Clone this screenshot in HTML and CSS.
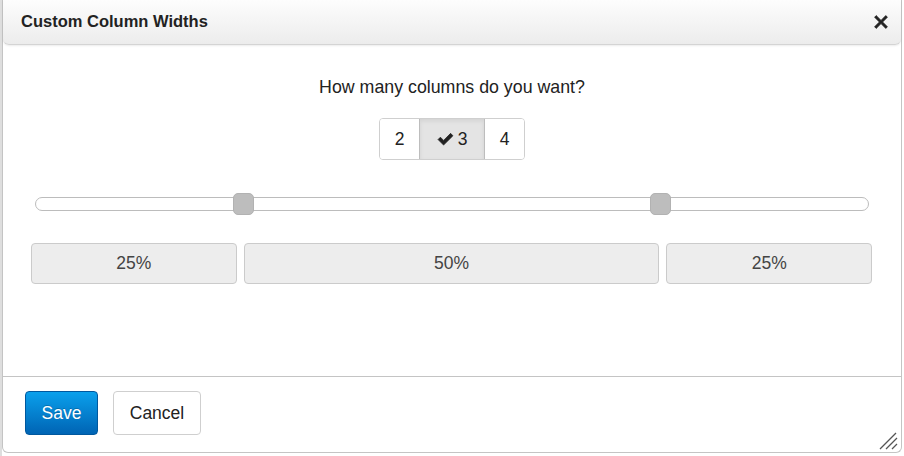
FILE: index.html
```html
<!DOCTYPE html>
<html>
<head>
<meta charset="utf-8">
<link rel="stylesheet" href="styles.css">
</head>
<body>
<div class="page">
  <div class="dialog">
    <div class="header">
      <span class="title">Custom Column Widths</span>
      <svg class="close" viewBox="0 0 14 14" width="14" height="14"><path d="M2.2 0.6 L7 5.4 L11.8 0.6 L13.4 2.2 L8.6 7 L13.4 11.8 L11.8 13.4 L7 8.6 L2.2 13.4 L0.6 11.8 L5.4 7 L0.6 2.2 Z" fill="#222" stroke="#222" stroke-width="0.8" stroke-linejoin="round"/></svg>
    </div>
    <div class="body">
      <p class="question">How many columns do you want?</p>
      <div class="group">
        <span class="opt">2</span>
        <span class="opt active"><svg class="check" viewBox="0 0 16 13" width="17" height="14"><path d="M1 7 L3.2 4.8 L6.2 7.8 L12.8 1.2 L15 3.4 L6.2 12.2 Z" fill="#222" stroke="#222" stroke-width="0.7" stroke-linejoin="round"/></svg>3</span>
        <span class="opt">4</span>
      </div>
      <div class="slider">
        <div class="track"></div>
        <span class="handle" style="left:25%"></span>
        <span class="handle" style="left:75%"></span>
      </div>
      <div class="cols">
        <div class="col c1">25%</div>
        <div class="col c2">50%</div>
        <div class="col c1">25%</div>
      </div>
    </div>
    <div class="footer">
      <span class="btn save">Save</span>
      <span class="btn cancel">Cancel</span>
      <svg class="grip" viewBox="0 0 20 18" width="20" height="18"><path d="M2 17 L18 1 M8 17 L19 6 M14 17 L19 12" stroke="#555" stroke-width="1.3" fill="none"/></svg>
    </div>
  </div>
</div>
</body>
</html>
```
FILE: styles.css
```css
html, body {
  margin: 0;
  padding: 0;
  background: #f3f3f3;
  font-family: "Liberation Sans", Arial, sans-serif;
  color: #333;
}
.page {
  width: 904px;
  height: 456px;
  padding-left: 2px;
  box-sizing: border-box;
  background: linear-gradient(90deg, #dedede 0, #dedede 2px, #fff 2px);
}
.dialog {
  width: 900px;
  height: 453px;
  box-sizing: border-box;
  border: 1px solid #c4c4c4;
  border-top: none;
  border-radius: 0 0 6px 6px;
  background: #fff;
  display: flex;
  flex-direction: column;
  position: relative;
}
.header {
  height: 45px;
  box-sizing: border-box;
  background: linear-gradient(#fdfdfd, #ececec);
  border-bottom: 1px solid #d4d4d4;
  border-radius: 0 0 6px 6px;
  box-shadow: 0 1px 2px rgba(0,0,0,0.08);
  display: flex;
  align-items: center;
  justify-content: space-between;
  padding: 0 13px 0 18px;
}
.title {
  font-weight: bold;
  font-size: 16.5px;
  color: #222;
  margin-top: -2px;
}
.close {
  display: block;
}
.body {
  flex: 1;
  padding: 0 28px 0 28px;
  display: flex;
  flex-direction: column;
  align-items: center;
}
.question {
  margin: 32px 0 0 0;
  font-size: 17.8px;
  line-height: 20px;
  color: #222;
}
.group {
  margin-top: 21px;
  display: flex;
  border: 1px solid #cfcfcf;
  border-radius: 4px;
  overflow: hidden;
  height: 42px;
  box-sizing: border-box;
}
.opt {
  display: flex;
  align-items: center;
  justify-content: center;
  font-size: 17.5px;
  color: #222;
  background: #fff;
  width: 39px;
  gap: 4px;
}
.opt.active {
  width: 64px;
  background: #e4e4e4;
  border-left: 1px solid #bdbdbd;
  border-right: 1px solid #bdbdbd;
  box-shadow: inset 0 2px 4px rgba(0,0,0,0.08);
}
.check {
  display: block;
}
.slider {
  position: relative;
  align-self: stretch;
  margin: 33px 4px 0 4px;
  height: 22px;
  display: flex;
  align-items: center;
}
.track {
  flex: 1;
  height: 14px;
  box-sizing: border-box;
  border: 1px solid #bcbcbc;
  border-radius: 7px;
  background: #fff;
}
.handle {
  position: absolute;
  top: 0;
  width: 21px;
  height: 22px;
  margin-left: -11px;
  box-sizing: border-box;
  background: #bdbdbd;
  border: 1px solid #b2b2b2;
  border-radius: 5px;
}
.cols {
  align-self: stretch;
  display: flex;
  gap: 7px;
  margin-top: 28px;
  margin-right: 1px;
}
.col {
  height: 41px;
  box-sizing: border-box;
  background: #ededed;
  border: 1px solid #cbcbcb;
  border-radius: 4px;
  display: flex;
  align-items: center;
  justify-content: center;
  font-size: 17.5px;
  color: #444;
}
.c1 { flex: 205 0 0; }
.c2 { flex: 417 0 0; }
.footer {
  height: 76px;
  box-sizing: border-box;
  border-top: 1px solid #c4c4c4;
  display: flex;
  align-items: flex-start;
  padding: 14px 0 0 22px;
  gap: 15px;
  position: relative;
}
.btn {
  height: 44px;
  box-sizing: border-box;
  border-radius: 4px;
  display: flex;
  align-items: center;
  justify-content: center;
  font-size: 17.5px;
}
.save {
  width: 73px;
  color: #fff;
  background: linear-gradient(#0aa0ec, #0064b4);
  border: 1px solid #00589e;
  text-shadow: 0 -1px 0 rgba(0,0,0,0.2);
}
.cancel {
  width: 88px;
  color: #222;
  background: #fff;
  border: 1px solid #cfcfcf;
}
.grip {
  position: absolute;
  right: 3px;
  bottom: 2px;
}
```
